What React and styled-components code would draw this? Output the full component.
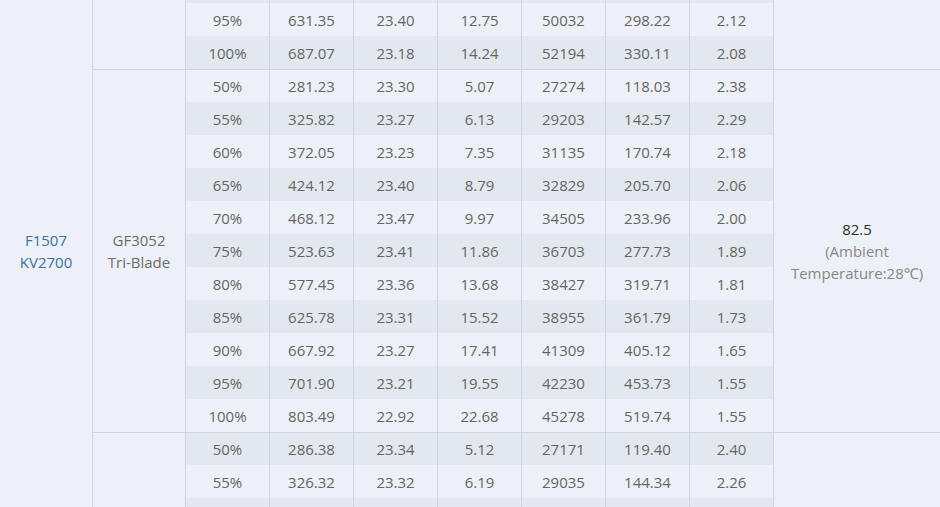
import React from "react";
import styled, { createGlobalStyle } from "styled-components";

const GlobalStyle = createGlobalStyle`
  html, body { margin: 0; padding: 0; background: #edf1f7; }
  body { font-family: "Open Sans", "Noto Sans", Arial, sans-serif; }
`;

const Viewport = styled.div`
  width: 940px;
  height: 507px;
  overflow: hidden;
  background: #edf1f7;
`;

const Table = styled.table`
  width: 940px;
  border-collapse: separate;
  border-spacing: 0;
  table-layout: fixed;
  font-size: 15px;
  line-height: 22px;
  color: #656565;
`;

const Row = styled.tr`
  height: ${(p) => p.$h || 33}px;
`;

const Cell = styled.td`
  box-sizing: border-box;
  padding: 0;
  text-align: center;
  vertical-align: middle;
  border-left: ${(p) => (p.$first ? "none" : "1px solid #cfd5de")};
  border-top: ${(p) => (p.$groupStart ? "1px solid #cfd5de" : "none")};
  white-space: nowrap;
`;

const MotorCell = styled(Cell)`
  color: #40709f;
  padding-bottom: 6px;
`;

const PropCell = styled(Cell)`
  color: #6c6c6c;
  white-space: normal;
`;

const DataCell = styled(Cell)`
  background: ${(p) => (p.$shade ? "#e3e8ef" : "#edf1f7")};
`;

const TempCell = styled(Cell)`
  white-space: normal;
`;

const TempValue = styled.div`
  color: #2f2f2f;
`;

const TempNote = styled.div`
  color: #888888;
`;

/* The table is scrolled: only a 3px sliver of the row above "95%" and a 9px
   sliver of the row below the last "55%" are in view. */
const groups = [
  {
    rows: [
      { h: 3, cells: ["", "", "", "", "", "", ""] },
      { cells: ["95%", "631.35", "23.40", "12.75", "50032", "298.22", "2.12"] },
      { cells: ["100%", "687.07", "23.18", "14.24", "52194", "330.11", "2.08"] },
    ],
  },
  {
    prop: ["GF3052", "Tri-Blade"],
    temp: ["82.5", "(Ambient", "Temperature:28℃)"],
    rows: [
      { cells: ["50%", "281.23", "23.30", "5.07", "27274", "118.03", "2.38"] },
      { cells: ["55%", "325.82", "23.27", "6.13", "29203", "142.57", "2.29"] },
      { cells: ["60%", "372.05", "23.23", "7.35", "31135", "170.74", "2.18"] },
      { cells: ["65%", "424.12", "23.40", "8.79", "32829", "205.70", "2.06"] },
      { cells: ["70%", "468.12", "23.47", "9.97", "34505", "233.96", "2.00"] },
      { cells: ["75%", "523.63", "23.41", "11.86", "36703", "277.73", "1.89"] },
      { cells: ["80%", "577.45", "23.36", "13.68", "38427", "319.71", "1.81"] },
      { cells: ["85%", "625.78", "23.31", "15.52", "38955", "361.79", "1.73"] },
      { cells: ["90%", "667.92", "23.27", "17.41", "41309", "405.12", "1.65"] },
      { cells: ["95%", "701.90", "23.21", "19.55", "42230", "453.73", "1.55"] },
      { cells: ["100%", "803.49", "22.92", "22.68", "45278", "519.74", "1.55"] },
    ],
  },
  {
    rows: [
      { cells: ["50%", "286.38", "23.34", "5.12", "27171", "119.40", "2.40"] },
      { cells: ["55%", "326.32", "23.32", "6.19", "29035", "144.34", "2.26"] },
      { h: 9, cells: ["", "", "", "", "", "", ""] },
    ],
  },
];

const colWidths = [92, 93, 84, 84, 84, 84, 84, 84, 84, 167];
const totalRows = groups.reduce((n, g) => n + g.rows.length, 0);

export default function App() {
  let index = 0;
  return (
    <>
      <GlobalStyle />
      <Viewport>
        <Table>
          <colgroup>
            {colWidths.map((w, i) => (
              <col key={i} style={{ width: w }} />
            ))}
          </colgroup>
          <tbody>
            {groups.map((g, gi) =>
              g.rows.map((r, ri) => {
                const shade = index % 2 === 0;
                const isFirstRowOverall = index === 0;
                index += 1;
                const start = ri === 0 && gi > 0;
                return (
                  <Row key={`${gi}-${ri}`} $h={r.h}>
                    {isFirstRowOverall && (
                      <MotorCell $first rowSpan={totalRows}>
                        F1507
                        <br />
                        KV2700
                      </MotorCell>
                    )}
                    {ri === 0 && (
                      <PropCell rowSpan={g.rows.length} $groupStart={start}>
                        {g.prop && (
                          <>
                            {g.prop[0]}
                            <br />
                            {g.prop[1]}
                          </>
                        )}
                      </PropCell>
                    )}
                    {r.cells.map((v, ci) => (
                      <DataCell key={ci} $shade={shade} $groupStart={start}>
                        {v}
                      </DataCell>
                    ))}
                    {ri === 0 && (
                      <TempCell rowSpan={g.rows.length} $groupStart={start}>
                        {g.temp && (
                          <>
                            <TempValue>{g.temp[0]}</TempValue>
                            <TempNote>{g.temp[1]}</TempNote>
                            <TempNote>{g.temp[2]}</TempNote>
                          </>
                        )}
                      </TempCell>
                    )}
                  </Row>
                );
              })
            )}
          </tbody>
        </Table>
      </Viewport>
    </>
  );
}
